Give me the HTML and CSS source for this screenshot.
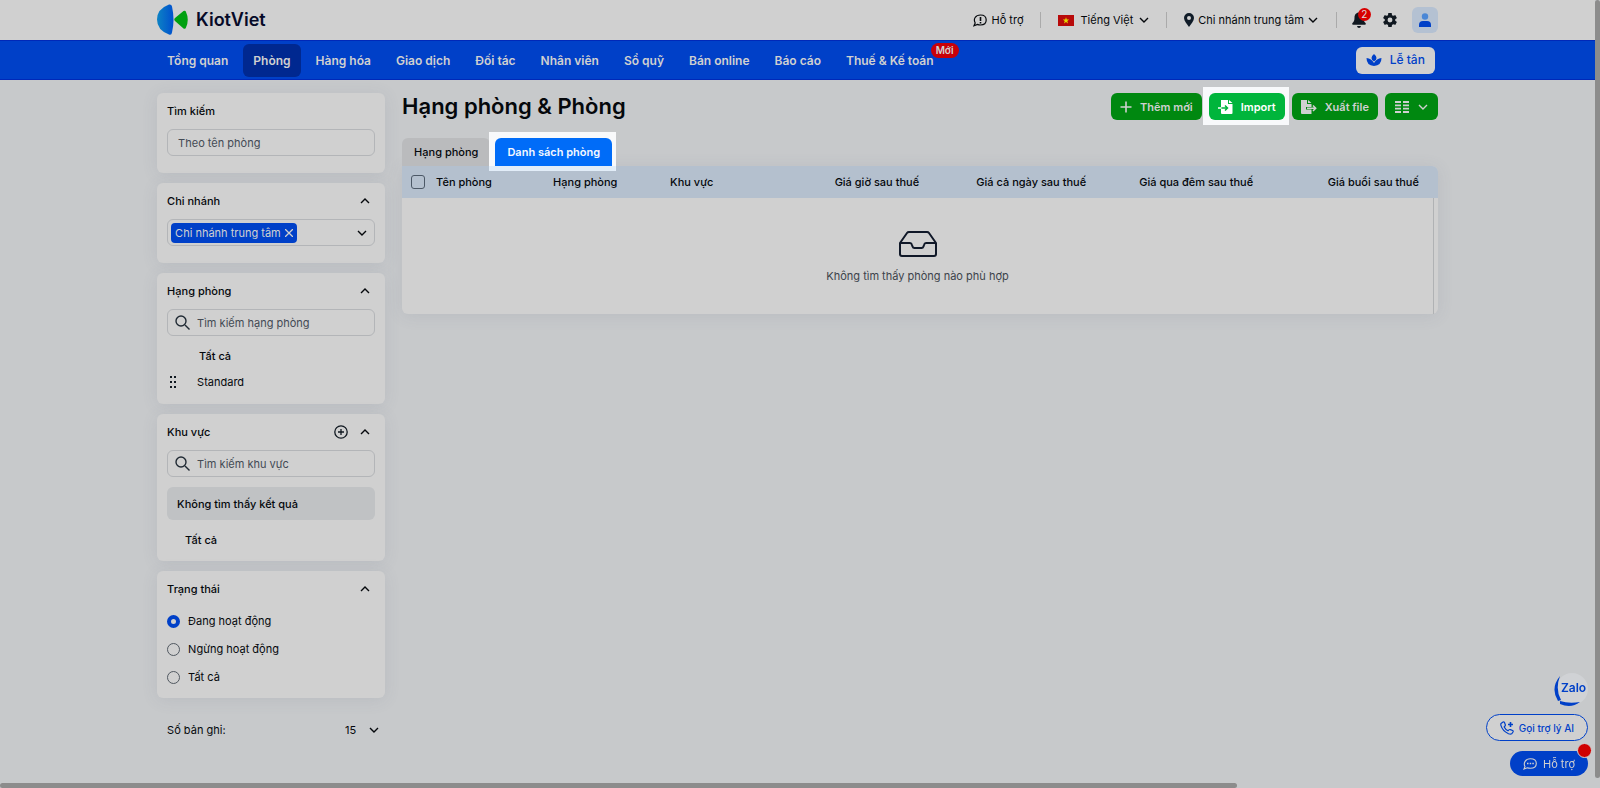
FILE: index.html
```html
<!DOCTYPE html>
<html lang="vi">
<head>
  <meta charset="UTF-8">
  <meta name="viewport" content="width=device-width, initial-scale=1.0">
  <title>KiotViet - Hạng phòng &amp; Phòng</title>
  <link rel="stylesheet" href="styles.css">
</head>
<body>
  <div class="page">
    <header class="topbar">
      <div class="wrap topbar-inner">
        <a href="#" class="logo">
          <svg width="32" height="32" viewBox="0 0 32 32">
            <defs>
              <linearGradient id="logoBlue" x1="0" x2="1">
                <stop offset="0" stop-color="#0d83c4"/>
                <stop offset="1" stop-color="#0050ce"/>
              </linearGradient>
            </defs>
            <path d="M12 0.500Q14.500 0 15 2.500Q18 16 15 28.500Q14.500 31.500 12 30.500Q0 26 0 15.500Q0 5 12 0.500z" fill="url(#logoBlue)"/>
            <path d="M18 14L26.500 7Q28.500 6 29 8Q32.500 15.500 29 23.500Q28.500 25.500 26.500 24.500L18 17Q16.500 15.500 18 14z" fill="#00a010"/>
          </svg>
          <span>KiotViet</span>
        </a>
        <div class="top-tools">
          <a href="#" class="tool help">
            <svg width="14" height="13" viewBox="0 0 14 13" fill="none" stroke="currentColor" stroke-width="1.200"><path d="M7.500 1C11 1 13.200 3 13.200 6S11 11 7.500 11C6 11 5.300 10.800 4.500 10.400L1 11.800L2.200 9C0 5 2.500 1 7.500 1z"/><path d="M7.500 3V7M7.500 8V9.500" stroke-width="1.600"/></svg>
            Hỗ trợ
          </a>
          <button class="tool lang">
            <svg width="16" height="11" viewBox="0 0 16 11"><path fill="#b80a0a" d="M0 0h16v11H0z"/><path fill="#e5d800" d="M8 2.200l.8 2.300h2.400L9.300 6l.7 2.400L8 7 6 8.400 6.700 6 4.800 4.500h2.400z"/></svg>
            Tiếng Việt
            <svg class="chev" width="10" height="6" viewBox="0 0 10 6"><path d="M1 1l4 4 4-4"/></svg>
          </button>
          <button class="tool branch">
            <svg width="10" height="14" viewBox="0 0 10 14"><path fill="#101c28" fill-rule="evenodd" d="M5 0a5 5 0 0 1 5 5c0 3-3 6-5 9C3 11 0 8 0 5a5 5 0 0 1 5-5zm0 3a2 2 0 1 0 0 4 2 2 0 0 0 0-4z"/></svg>
            Chi nhánh trung tâm
            <svg class="chev" width="10" height="6" viewBox="0 0 10 6"><path d="M1 1l4 4 4-4"/></svg>
          </button>
          <div class="icons">
            <button class="bell" aria-label="Thông báo">
              <svg width="14" height="16" viewBox="0 0 14 16" fill="#101820"><path d="M7 0.500c3 0 4.500 2.500 4.500 5 0 3 .5 4 2 5.500.8 1 0 1.800-.8 1.800H1.300C.5 12.800-.3 12 .5 11c1.500-1.500 2-2.500 2-5.500C2.500 3 4 .5 7 .5zM5 14h4q-.3 2-2 2T5 14z"/></svg>
              <span class="count">2</span>
            </button>
            <button class="gear" aria-label="Thiết lập">
              <svg width="14" height="14" viewBox="2 2 20 20" fill="#101820"><path d="M19.430 12.980c.04-.32.07-.64.07-.98s-.03-.66-.07-.98l2.110-1.650c.19-.15.240-.42.120-.64l-2-3.460c-.12-.22-.39-.3-.61-.22l-2.490 1c-.52-.4-1.080-.73-1.690-.98l-.38-2.650C14.460 2.180 14.250 2 14 2h-4c-.25 0-.46.180-.49.420l-.38 2.650c-.61.250-1.170.590-1.690.980l-2.490-1c-.23-.09-.49 0-.61.220l-2 3.460c-.13.220-.07.490.120.640l2.110 1.650c-.04.320-.07.650-.07.980s.03.660.070.980l-2.110 1.650c-.19.150-.24.420-.12.640l2 3.460c.12.220.39.300.61.220l2.490-1c.52.400 1.080.730 1.690.980l.38 2.650c.03.240.240.420.490.420h4c.25 0 .46-.18.490-.42l.38-2.650c.61-.25 1.170-.59 1.690-.98l2.490 1c.23.090.490 0 .61-.22l2-3.460c.12-.22.070-.49-.12-.64l-2.110-1.650zM12 15.500a3.500 3.500 0 1 1 0-7 3.500 3.500 0 0 1 0 7z"/></svg>
            </button>
            <button class="avatar" aria-label="Tài khoản">
              <svg width="12" height="14" viewBox="0 0 12 14"><circle cx="6" cy="3.500" r="3.200" fill="#4a87d6"/><path d="M0 14v-2q0-4 4-4h4q4 0 4 4v2z" fill="#0040c8"/></svg>
            </button>
          </div>
        </div>
      </div>
    </header>

    <nav class="navbar">
      <div class="wrap navbar-inner">
        <a href="#">Tổng quan</a>
        <a href="#" class="active">Phòng</a>
        <a href="#">Hàng hóa</a>
        <a href="#">Giao dịch</a>
        <a href="#">Đối tác</a>
        <a href="#">Nhân viên</a>
        <a href="#">Sổ quỹ</a>
        <a href="#">Bán online</a>
        <a href="#">Báo cáo</a>
        <a href="#">Thuế &amp; Kế toán<span class="new">Mới</span></a>
        <button class="reception">
          <svg width="16" height="12" viewBox="0 0 16 12" fill="currentColor"><path d="M8 0q2.500 2 2.500 4T8 7.500Q5.500 6 5.500 4T8 0z"/><path d="M0.500 4Q5.500 4.500 8 9Q10.500 4.500 15.500 4Q15.500 11.500 8 12Q0.500 11.500 0.500 4z"/></svg>
          Lễ tân
        </button>
      </div>
    </nav>

    <div class="wrap content">
      <aside class="sidebar">
        <section class="card search-card">
          <label class="card-title" for="search">Tìm kiếm</label>
          <input type="text" id="search" class="field" placeholder="Theo tên phòng">
        </section>

        <section class="card branch-card">
          <h3 class="card-title">Chi nhánh <svg class="chev up" width="10" height="6" viewBox="0 0 10 6"><path d="M1 5l4-4 4 4"/></svg></h3>
          <div class="field multi">
            <button class="tag">Chi nhánh trung tâm
              <svg width="8" height="8" viewBox="0 0 8 8"><path d="M0 0l8 8M8 0L0 8" stroke="currentColor" stroke-width="1.300"/></svg>
            </button>
            <svg class="chev" width="10" height="6" viewBox="0 0 10 6"><path d="M1 1l4 4 4-4"/></svg>
          </div>
        </section>

        <section class="card">
          <h3 class="card-title">Hạng phòng <svg class="chev up" width="10" height="6" viewBox="0 0 10 6"><path d="M1 5l4-4 4 4"/></svg></h3>
          <div class="field with-icon">
            <svg width="15" height="15" viewBox="0 0 15 15"><circle cx="6" cy="6" r="5"/><path d="M10 10l4.500 4.500"/></svg>
            <input type="text" aria-label="Tìm kiếm hạng phòng" placeholder="Tìm kiếm hạng phòng">
          </div>
          <ul class="type-list">
            <li class="all">Tất cả</li>
            <li>
              <svg width="8" height="13" viewBox="0 0 8 13" fill="#101820"><path d="M1 0h2v2H1zM5 0h2v2H5zM1 5h2v2H1zM5 5h2v2H5zM1 10h2v2H1zM5 10h2v2H5z"/></svg>
              Standard
            </li>
          </ul>
        </section>

        <section class="card area-card">
          <h3 class="card-title">Khu vực
            <button class="add" aria-label="Thêm khu vực"><svg width="14" height="14" viewBox="0 0 14 14" fill="none" stroke="#101820" stroke-width="1.300"><circle cx="7" cy="7" r="6.200"/><path d="M7 4v6M4 7h6"/></svg></button>
            <svg class="chev up" width="10" height="6" viewBox="0 0 10 6"><path d="M1 5l4-4 4 4"/></svg>
          </h3>
          <div class="field with-icon">
            <svg width="15" height="15" viewBox="0 0 15 15"><circle cx="6" cy="6" r="5"/><path d="M10 10l4.500 4.500"/></svg>
            <input type="text" aria-label="Tìm kiếm khu vực" placeholder="Tìm kiếm khu vực">
          </div>
          <p class="no-result">Không tìm thấy kết quả</p>
          <p class="area-all">Tất cả</p>
        </section>

        <section class="card status-card">
          <h3 class="card-title">Trạng thái <svg class="chev up" width="10" height="6" viewBox="0 0 10 6"><path d="M1 5l4-4 4 4"/></svg></h3>
          <label class="radio"><input type="radio" name="status" checked> Đang hoạt động</label>
          <label class="radio"><input type="radio" name="status"> Ngừng hoạt động</label>
          <label class="radio"><input type="radio" name="status"> Tất cả</label>
        </section>

        <div class="page-size">
          <label for="pageSize">Số bản ghi:</label>
          <span class="select-box">
            <select id="pageSize">
              <option>15</option>
              <option>20</option>
              <option>50</option>
            </select>
            <svg class="chev" width="10" height="6" viewBox="0 0 10 6"><path d="M1 1l4 4 4-4"/></svg>
          </span>
        </div>
      </aside>

      <main class="main">
        <div class="heading">
          <h1>Hạng phòng &amp; Phòng</h1>
          <div class="actions">
            <button class="btn"><svg width="12" height="12" viewBox="0 0 12 12"><path d="M6 0.500v11M0.500 6h11" stroke="currentColor" stroke-width="1.600"/></svg>Thêm mới</button>
            <span class="spot"><button class="btn import"><svg width="15" height="14" viewBox="0 0 15 14"><path fill="currentColor" d="M3 0h7v4h4.500v9q0 1-1 1H4q-1 0-1-1zM11 0l3.500 3H11z"/><path d="M3 8h6M7 5.500L9.500 8 7 10.500" fill="none" stroke="#00b53c" stroke-width="1.500"/><path d="M0 8h3.500" stroke="currentColor" stroke-width="1.500"/></svg>Import</button></span>
            <button class="btn"><svg width="16" height="14" viewBox="0 0 16 14"><path fill="currentColor" d="M0 0h6v4h4.500v3H5v2.500h5.500V14H1q-1 0-1-1zM7 0l3.500 3H7z"/><path d="M6 8.200h8M12 5.500l2.700 2.700L12 11" fill="none" stroke="currentColor" stroke-width="1.500"/></svg>Xuất file</button>
            <button class="btn columns" aria-label="Cột hiển thị"><svg width="14" height="12" viewBox="0 0 14 12"><path d="M0 1h6M8 1h6M0 4.300h6M8 4.300h6M0 7.700h6M8 7.700h6M0 11h6M8 11h6" stroke="currentColor" stroke-width="1.800"/></svg><svg class="chev" width="10" height="6" viewBox="0 0 10 6"><path d="M1 1l4 4 4-4"/></svg></button>
          </div>
        </div>

        <div class="tabs">
          <button class="tab">Hạng phòng</button>
          <span class="spot tab-spot"><button class="tab selected">Danh sách phòng</button></span>
        </div>

        <div class="grid">
          <table>
            <thead>
              <tr>
                <th class="c-check"><input type="checkbox" aria-label="Chọn tất cả"></th>
                <th class="c-name">Tên phòng</th>
                <th class="c-name">Hạng phòng</th>
                <th class="c-name">Khu vực</th>
                <th class="c-hour num">Giá giờ sau thuế</th>
                <th class="c-price num">Giá cả ngày sau thuế</th>
                <th class="c-price num">Giá qua đêm sau thuế</th>
                <th class="num last">Giá buổi sau thuế</th>
              </tr>
            </thead>
          </table>
          <div class="empty">
            <svg width="38" height="26" viewBox="0 0 38 26" fill="none" stroke="#101828" stroke-width="2" stroke-linejoin="round"><path d="M1 12L8 2Q8.700 1 10 1H28Q29.300 1 30 2L37 12V23Q37 25 35 25H3Q1 25 1 23z"/><path d="M1 12H11Q12.500 12 13 14L13.500 15.500Q14 17 15.500 17H22.500Q24 17 24.500 15.500L25 14Q25.500 12 27 12H37"/></svg>
            <p>Không tìm thấy phòng nào phù hợp</p>
          </div>
        </div>
      </main>
    </div>
  </div>

  <div class="floating">
    <button class="zalo"><svg width="34" height="34" viewBox="0 0 34 34"><circle cx="18" cy="16" r="16" fill="#d0d2d5"/><path d="M6 3Q-4 15 4 28L7 27Q1 16 6 3zM6 28Q15 31 26 29Q17 36 6 31z" fill="#0040c8"/></svg><span>Zalo</span></button>
    <button class="ai">
      <svg width="14" height="14" viewBox="0 0 14 14" fill="none" stroke="currentColor" stroke-width="1.200"><path d="M1 2.500L3 1Q4 .6 4.500 1.600L5.300 3.700Q5.600 4.500 4.800 5.200L4.200 5.900Q5.500 8.500 8 9.700L8.900 8.900Q9.500 8.300 10.400 8.600L12.600 9.500Q13.500 10 13 11L11.700 12.800Q10.500 13.500 8.500 12.700Q2.500 10 1 4.700Q.6 3.300 1 2.500z"/><path d="M10.500 1v5M8 3.500h5" stroke-width="1.600"/></svg>
      Gọi trợ lý AI
    </button>
    <button class="support">
      <svg width="14" height="12" viewBox="0 0 14 12" fill="none" stroke="currentColor" stroke-width="1.100"><path d="M7.300.8C11 .8 13.300 2.800 13.300 5.500S11 10.300 7.300 10.300Q5.500 10.300 4.300 9.800L1 11L2 8.500C0 5 2.500.8 7.300.8z"/><path d="M4 5.500h1.500M6.700 5.500h1.500M9.300 5.500h1.500" stroke-width="1.500"/></svg>
      Hỗ trợ
      <span class="dot"></span>
    </button>
  </div>

  <div class="scroll-y"></div>
  <div class="scroll-x"></div>
</body>
</html>
```
FILE: styles.css
```css
* {
  box-sizing: border-box;
}
body {
  margin: 0;
  background-color: #c7c9cb;
  color: #05080c;
  font-family: Inter, sans-serif;
  font-size: 11px;
  line-height: 16px;
}
button, input, select {
  font: inherit;
  color: inherit;
}
button {
  display: flex;
  align-items: center;
  padding: 0;
  border: none;
  background: none;
  white-space: nowrap;
  cursor: pointer;
}
a {
  color: inherit;
  text-decoration: none;
}
svg {
  display: block;
  flex: none;
}
h1, h3, p, ul {
  margin: 0;
  padding: 0;
}
.page {
  min-height: 100vh;
  padding-right: 5px;
}
.wrap {
  width: 80.3%;
  min-width: 1180px;
  margin: 0 auto;
}
.chev {
  fill: none;
  stroke: currentColor;
  stroke-width: 1.4;
}

/* header */
.topbar {
  background-color: #d0d0d0;
}
.topbar-inner {
  display: flex;
  align-items: center;
  justify-content: space-between;
  height: 40px;
}
.logo {
  display: flex;
  align-items: center;
  gap: 7px;
  font-size: 18px;
  font-weight: 600;
  color: #060a28;
}
.top-tools, .tool, .icons {
  display: flex;
  align-items: center;
}
.tool {
  height: 16px;
  border-right: 1px solid #aaa;
}
.help {
  gap: 4px;
  padding-right: 17px;
}
.lang {
  gap: 6px;
  padding: 0 17px;
}
.branch {
  gap: 4px;
  padding: 0 18px 0 17px;
}
.icons {
  padding-left: 15px;
}
.bell {
  position: relative;
  margin-right: 17px;
}
.count {
  position: absolute;
  top: -4px;
  left: 6px;
  width: 13px;
  height: 13px;
  border-radius: 50%;
  background-color: #d80000;
  color: #ddd;
  font-size: 10px;
  line-height: 13px;
  text-align: center;
}
.gear {
  margin-right: 15px;
}
.avatar {
  justify-content: center;
  width: 26px;
  height: 26px;
  border-radius: 6px;
  background-color: #b4c1d2;
}

/* menu */
.navbar {
  background-color: #0040c8;
  border-top: 1px solid #0028b8;
  border-bottom: 1px solid #0028b8;
  color: #d0d0d0;
  font-size: 12px;
  font-weight: 600;
}
.navbar-inner {
  display: flex;
  align-items: center;
  gap: 5px;
  height: 38px;
}
.navbar a {
  position: relative;
  padding: 9px 10px 8px;
  border-radius: 6px;
  white-space: nowrap;
}
.navbar .active {
  background-color: #002890;
}
.new {
  position: absolute;
  top: -1px;
  right: -15px;
  padding: 0 5px;
  border-radius: 8px;
  background-color: #c80008;
  font-size: 10px;
  line-height: 15px;
}
.reception {
  gap: 8px;
  height: 27px;
  margin-left: auto;
  margin-right: 3px;
  padding: 0 10px;
  border-radius: 6px;
  background-color: #d0d0d0;
  color: #0040c8;
  font-weight: 500;
}

/* sidebar */
.content {
  display: flex;
  gap: 17px;
  padding-top: 13px;
}
.sidebar {
  flex: none;
  width: 228px;
}
.card {
  margin-bottom: 10px;
  padding: 10px 10px 12px;
  border-radius: 6px;
  background-color: #d0d0d0;
  box-shadow: 0 2px 16px rgba(90, 100, 120, 0.12);
}
.card-title {
  display: flex;
  align-items: center;
  margin-bottom: 10px;
  font-size: 11px;
  font-weight: 500;
}
.card-title .up {
  margin-left: auto;
  margin-right: 5px;
}
.field {
  display: flex;
  align-items: center;
  width: 100%;
  height: 27px;
  border: 1px solid #b3b5b8;
  border-radius: 6px;
  background: transparent;
}
input.field {
  padding: 0 10px;
}
.search-card, .branch-card {
  padding-bottom: 17px;
}
input::placeholder {
  color: #434a54;
  opacity: 1;
}
.multi {
  justify-content: space-between;
  padding: 0 7px 0 3px;
}
.tag {
  gap: 4px;
  height: 20px;
  padding: 0 4px;
  border-radius: 4px;
  background-color: #0040c8;
  color: #d0d0d0;
}
.with-icon {
  gap: 5px;
  padding: 0 7px;
}
.with-icon svg {
  fill: none;
  stroke: #202a34;
  stroke-width: 1.4;
}
.with-icon input {
  width: 100%;
  border: none;
  background: none;
}
.type-list {
  margin-top: 7px;
  list-style: none;
}
.type-list li {
  display: flex;
  align-items: center;
  gap: 20px;
  height: 26px;
  padding-left: 2px;
}
.type-list .all {
  padding-left: 32px;
  font-weight: 500;
}
.type-list li:last-child {
  margin-bottom: -3px;
}
.add {
  margin-left: auto;
}
.card-title .add + .up {
  margin-left: 12px;
}
.no-result {
  margin-top: 10px;
  padding: 9px 10px 8px;
  border-radius: 6px;
  background-color: #c0c2c4;
  font-weight: 500;
}
.area-all {
  margin: 12px 0 1px;
  padding-left: 18px;
  font-weight: 500;
}
.radio {
  display: flex;
  align-items: center;
  gap: 8px;
  height: 28px;
}
.radio input {
  appearance: none;
  width: 13px;
  height: 13px;
  margin: 0;
  border: 1px solid #505860;
  border-radius: 50%;
}
.radio input:checked {
  border: 4px solid #0040c8;
}
.status-card {
  padding-bottom: 7px;
}
.status-card .card-title {
  margin-bottom: 10px;
}
.page-size {
  display: flex;
  justify-content: space-between;
  padding: 14px 6px 0 10px;
}
.select-box {
  display: flex;
  align-items: center;
  gap: 10px;
}
select {
  appearance: none;
  padding: 0;
  border: none;
  background: none;
}

/* main */
.main {
  flex: 1;
}
.heading {
  display: flex;
  justify-content: space-between;
  align-items: center;
  height: 27px;
}
h1 {
  font-size: 22px;
  line-height: 27px;
  font-weight: 600;
}
.actions {
  display: flex;
  gap: 7px;
}
.btn {
  gap: 8px;
  height: 27px;
  padding: 0 9px;
  border-radius: 6px;
  background-color: #008810;
  color: #d0d0d0;
  font-weight: 600;
}
.columns {
  gap: 9px;
  padding: 0 10px;
}
/* steps of the guide that stay lit above the dimmed page */
.spot {
  position: relative;
  margin: -6px -4px -5px -6px;
  padding: 6px 4px 5px 6px;
  background-color: #f8f9fb;
}
.tab-spot {
  background-image: linear-gradient(#e2edf8, #e2edf8);
  background-position: bottom;
  background-repeat: no-repeat;
  background-size: 100% 5px;
}
.tabs {
  display: flex;
  gap: 5px;
  margin-top: 18px;
}
.tab {
  height: 28px;
  padding: 0 12px;
  border-radius: 6px 6px 0 0;
  background-color: #babbbd;
  font-weight: 500;
}
.selected {
  background-color: #006cf8;
  color: #f5f8ff;
  font-weight: 600;
}
.import {
  background-color: #00b53c;
  color: #fff;
}
.grid {
  border-radius: 0 6px 6px 6px;
  background-color: #d0d0d0;
  box-shadow: 0 2px 16px rgba(90, 100, 120, 0.12);
}
table {
  width: 100%;
  border-collapse: collapse;
  table-layout: fixed;
  background-color: #b4c0ce;
  border-radius: 0 6px 0 0;
}
th {
  height: 32px;
  padding: 0 10px;
  font-weight: 500;
  text-align: left;
  white-space: nowrap;
}
th input {
  display: block;
  appearance: none;
  width: 14px;
  height: 14px;
  margin: 0;
  border: 1px solid #4c5866;
  border-radius: 3px;
}
.num {
  text-align: right;
}
.c-check {
  width: 24px;
  padding: 0 0 0 9px;
}
.c-name {
  width: 117px;
}
.c-hour {
  width: 152px;
}
.c-price {
  width: 167px;
}
.last {
  padding-right: 19px;
}
.empty {
  display: flex;
  flex-direction: column;
  align-items: center;
  margin-right: 4px;
  padding: 33px 0 30px;
  border-right: 1px solid #b0b2b4;
  color: #3c434b;
}
.empty p {
  margin-top: 11px;
}

/* floating buttons */
.floating {
  position: fixed;
  right: 12px;
  bottom: 12px;
  display: flex;
  flex-direction: column;
  align-items: flex-end;
  color: #0040c8;
}
.zalo {
  position: relative;
  margin-bottom: 7px;
}
.zalo span {
  position: absolute;
  left: 7px;
  top: 7px;
  font-size: 12px;
  font-weight: 600;
}
.ai {
  gap: 5px;
  height: 27px;
  margin-bottom: 10px;
  padding: 0 13px;
  border: 1px solid #0040c8;
  border-radius: 14px;
  background-color: #d0d0d0;
  font-size: 10px;
  font-weight: 500;
}
.support {
  position: relative;
  gap: 6px;
  height: 25px;
  padding: 0 13px;
  border-radius: 13px;
  background-color: #0040c8;
  color: #d0d0d0;
}
.dot {
  position: absolute;
  top: -8px;
  right: -4px;
  width: 15px;
  height: 15px;
  border: 1px solid #d0d0d0;
  border-radius: 50%;
  background-color: #d00000;
}

/* scrollbars */
.scroll-y, .scroll-x {
  position: fixed;
  border-radius: 3px;
  background-color: #8c8c8c;
}
.scroll-y {
  top: 0;
  right: 0;
  bottom: 10px;
  width: 5px;
}
.scroll-x {
  left: 0;
  bottom: 0;
  width: 77.3%;
  height: 5px;
}
```
